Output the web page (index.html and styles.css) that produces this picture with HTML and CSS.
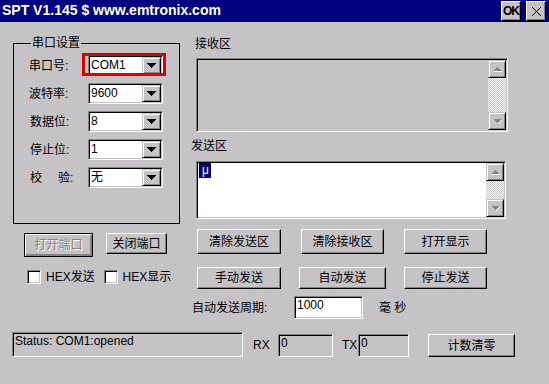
FILE: index.html
```html
<!DOCTYPE html>
<html lang="zh">
<head>
  <meta charset="UTF-8" />
  <title>SPT V1.145</title>
  <link rel="stylesheet" href="styles.css">
</head>
<body>
  <div class="window">
    <div class="titlebar">
      <span class="title">SPT V1.145 $ www.emtronix.com</span>
      <div class="title-btns">
        <button class="tbtn ok">OK</button>
        <button class="tbtn">
          <svg width="9" height="9" viewBox="0 0 9 9" shape-rendering="crispEdges"><path d="M0 0h1v1H0zM1 1h1v1H1zM2 2h1v1H2zM3 3h1v1H3zM4 4h1v1H4zM5 5h1v1H5zM6 6h1v1H6zM7 7h1v1H7zM8 8h1v1H8zM8 0h1v1H8zM7 1h1v1H7zM6 2h1v1H6zM5 3h1v1H5zM3 5h1v1H3zM2 6h1v1H2zM1 7h1v1H1zM0 8h1v1H0z"/></svg>
        </button>
      </div>
    </div>

    <div class="main">
      <div class="left">
        <fieldset class="group">
          <legend>串口设置</legend>
          <div class="row">
            <span class="lbl">串口号:</span>
            <div class="combo marked"><span class="val">COM1</span><span class="drop"><svg width="9" height="5" viewBox="0 0 9 5" shape-rendering="crispEdges"><path d="M0 0h9v1H0zM1 1h7v1H1zM2 2h5v1H2zM3 3h3v1H3zM4 4h1v1H4z"/></svg></span></div>
          </div>
          <div class="row">
            <span class="lbl">波特率:</span>
            <div class="combo"><span class="val">9600</span><span class="drop"><svg width="9" height="5" viewBox="0 0 9 5" shape-rendering="crispEdges"><path d="M0 0h9v1H0zM1 1h7v1H1zM2 2h5v1H2zM3 3h3v1H3zM4 4h1v1H4z"/></svg></span></div>
          </div>
          <div class="row">
            <span class="lbl">数据位:</span>
            <div class="combo"><span class="val">8</span><span class="drop"><svg width="9" height="5" viewBox="0 0 9 5" shape-rendering="crispEdges"><path d="M0 0h9v1H0zM1 1h7v1H1zM2 2h5v1H2zM3 3h3v1H3zM4 4h1v1H4z"/></svg></span></div>
          </div>
          <div class="row">
            <span class="lbl">停止位:</span>
            <div class="combo"><span class="val">1</span><span class="drop"><svg width="9" height="5" viewBox="0 0 9 5" shape-rendering="crispEdges"><path d="M0 0h9v1H0zM1 1h7v1H1zM2 2h5v1H2zM3 3h3v1H3zM4 4h1v1H4z"/></svg></span></div>
          </div>
          <div class="row">
            <span class="lbl">校<span class="gap"></span>验:</span>
            <div class="combo"><span class="val">无</span><span class="drop"><svg width="9" height="5" viewBox="0 0 9 5" shape-rendering="crispEdges"><path d="M0 0h9v1H0zM1 1h7v1H1zM2 2h5v1H2zM3 3h3v1H3zM4 4h1v1H4z"/></svg></span></div>
          </div>
        </fieldset>

        <div class="port-btns">
          <button class="btn default" disabled>打开端口</button>
          <button class="btn close-port">关闭端口</button>
        </div>

        <div class="checks">
          <label class="check"><span class="box"></span>HEX发送</label>
          <label class="check"><span class="box"></span>HEX显示</label>
        </div>
      </div>

      <div class="right">
        <div class="area-label recv-label">接收区</div>
        <div class="textbox recv">
          <div class="text"></div>
          <div class="vscroll">
            <span class="sbtn"><svg width="9" height="5" viewBox="0 0 9 5" shape-rendering="crispEdges"><path fill="#fff" d="M1 4h8v1H1z"/><path fill="#848284" d="M3 0h1v1H3zM2 1h3v1H2zM1 2h5v1H1zM0 3h7v1H0z" transform="translate(1 0)"/></svg></span>
            <span class="track"></span>
            <span class="sbtn"><svg width="9" height="5" viewBox="0 0 9 5" shape-rendering="crispEdges"><path fill="#fff" d="M8 1h1v1H8zM7 2h1v1H7zM6 3h1v1H6zM5 4h1v1H5z"/><path fill="#848284" d="M1 0h7v1H1zM2 1h5v1H2zM3 2h3v1H3zM4 3h1v1H4z"/></svg></span>
          </div>
        </div>

        <div class="area-label send-label">发送区</div>
        <div class="textbox send">
          <div class="text"><span class="caret"></span><span class="sel">μ</span></div>
          <div class="vscroll">
            <span class="sbtn"><svg width="9" height="5" viewBox="0 0 9 5" shape-rendering="crispEdges"><path fill="#fff" d="M1 4h8v1H1z"/><path fill="#848284" d="M3 0h1v1H3zM2 1h3v1H2zM1 2h5v1H1zM0 3h7v1H0z" transform="translate(1 0)"/></svg></span>
            <span class="track"></span>
            <span class="sbtn"><svg width="9" height="5" viewBox="0 0 9 5" shape-rendering="crispEdges"><path fill="#fff" d="M8 1h1v1H8zM7 2h1v1H7zM6 3h1v1H6zM5 4h1v1H5z"/><path fill="#848284" d="M1 0h7v1H1zM2 1h5v1H2zM3 2h3v1H3zM4 3h1v1H4z"/></svg></span>
          </div>
        </div>

        <div class="btn-row row-1">
          <button class="btn w84">清除发送区</button>
          <button class="btn w83">清除接收区</button>
          <button class="btn w83">打开显示</button>
        </div>
        <div class="btn-row row-2">
          <button class="btn w84">手动发送</button>
          <button class="btn w87">自动发送</button>
          <button class="btn w83">停止发送</button>
        </div>
        <div class="period">
          <span class="period-lbl">自动发送周期:</span>
          <div class="field period-input">1000</div>
          <span class="unit">毫 秒</span>
        </div>
      </div>
    </div>

    <div class="status-row">
      <div class="field status">Status: COM1:opened</div>
      <span class="cnt-lbl rx">RX</span>
      <div class="field cnt rx-box">0</div>
      <span class="cnt-lbl tx">TX</span>
      <div class="field cnt tx-box">0</div>
      <button class="btn reset">计数清零</button>
    </div>
  </div>
</body>
</html>
```

FILE: styles.css
```css
* {
  box-sizing: border-box;
}
body {
  margin: 0;
  background: #c6c3c6;
  font-family: "Liberation Sans", "Noto Sans CJK SC", sans-serif;
  font-size: 12px;
  color: #000;
}
.window {
  width: 549px;
  height: 384px;
  background: #c6c3c6;
  overflow: hidden;
}

/* Title bar */
.titlebar {
  height: 22px;
  background: #000080;
  border-bottom: 1px solid #000;
  display: flex;
  align-items: flex-start;
  justify-content: space-between;
  padding: 0 3px 0 2px;
}
.title {
  color: #fff;
  font-weight: bold;
  font-size: 14px;
  line-height: 21px;
}
.title-btns {
  display: flex;
  gap: 5px;
  padding-top: 1px;
}
.tbtn {
  width: 20px;
  height: 20px;
  padding: 0;
  margin: 0;
  background: #c6c3c6;
  border: 1px solid;
  border-color: #fff #000 #000 #fff;
  box-shadow: inset -1px -1px #848284;
  display: flex;
  align-items: center;
  justify-content: center;
  font-family: "Liberation Sans", sans-serif;
  font-weight: bold;
  font-size: 12px;
  color: #000;
  letter-spacing: -1px;
}

/* Layout */
.main {
  display: flex;
}
.left {
  width: 167px;
  margin-left: 13px;
}
.right {
  width: 320px;
  margin-left: 11px;
}

/* Group box */
.group {
  margin: 14px 0 0;
  padding: 5px 0 35px 15px;
  border: 1px solid #000;
  display: flex;
  flex-direction: column;
  gap: 7px;
}
.group legend {
  margin-left: 2px;
  padding: 0 1px;
  line-height: 14px;
}
.row {
  display: flex;
  align-items: center;
  height: 21px;
}
.lbl {
  width: 59px;
  line-height: 14px;
  white-space: nowrap;
}
.row:nth-child(n+4) .lbl {
  padding-left: 1px;
}
.gap {
  display: inline-block;
  width: 16px;
}

/* Combo box */
.combo {
  position: relative;
  width: 75px;
  height: 21px;
  background: #fff;
  border: 1px solid;
  border-color: #848284 #fff #fff #848284;
  box-shadow: inset 1px 1px #000, inset -1px -1px #c6c3c6;
  padding: 1px;
  display: flex;
  align-items: stretch;
}
.combo .val {
  flex: 1;
  padding-left: 1px;
  line-height: 17px;
}
.drop {
  width: 19px;
  background: #c6c3c6;
  border: 1px solid;
  border-color: #c6c3c6 #000 #000 #c6c3c6;
  box-shadow: inset 1px 1px #fff, inset -1px -1px #848284;
  display: flex;
  align-items: center;
  justify-content: center;
}
.drop svg {
  display: block;
}
.marked::after {
  content: "";
  position: absolute;
  left: -7px;
  top: -3px;
  right: -4px;
  bottom: -1px;
  border: 3px solid #e00000;
}

/* Push buttons */
.btn {
  margin: 0;
  padding: 0;
  height: 25px;
  background: #c6c3c6;
  border: 1px solid;
  border-color: #fff #000 #000 #fff;
  box-shadow: inset -1px -1px #848284;
  font-family: "Liberation Sans", "Noto Sans CJK SC", sans-serif;
  font-size: 12px;
  color: #000;
  line-height: 14px;
}
.btn:disabled {
  color: #848284;
  text-shadow: 1px 1px #fff;
}
.btn.default {
  border-color: #000;
  box-shadow: inset 1px 1px #fff, inset -2px -2px #848284, inset -1px -1px #000;
}
.port-btns {
  display: flex;
  align-items: flex-start;
  gap: 13px;
  margin: 9px 0 0 11px;
}
.port-btns .default {
  width: 69px;
  height: 24px;
}
.port-btns .close-port {
  width: 61px;
  height: 21px;
}

/* Check boxes */
.checks {
  display: flex;
  margin: 13px 0 0 14px;
}
.check {
  display: flex;
  align-items: center;
  gap: 5px;
  width: 79px;
  line-height: 14px;
}
.box {
  width: 14px;
  height: 14px;
  background: #fff;
  border: 1px solid;
  border-color: #848284 #fff #fff #848284;
  box-shadow: inset 1px 1px #000, inset -1px -1px #c6c3c6;
}

/* Text areas */
.area-label {
  line-height: 14px;
}
.recv-label {
  margin: 15px 0 0 4px;
}
.send-label {
  margin-top: 7px;
}
.textbox {
  display: flex;
  margin-left: 5px;
  border: 1px solid;
  border-color: #848284 #fff #fff #848284;
  box-shadow: inset 1px 1px #000, inset -1px -1px #c6c3c6;
  padding: 1px;
}
.textbox .text {
  flex: 1;
}
.recv {
  width: 312px;
  height: 74px;
  margin-top: 7px;
  background: #c6c3c6;
}
.send {
  width: 310px;
  height: 58px;
  margin-top: 8px;
  background: #fff;
}
.send .text {
  padding-left: 1px;
  display: flex;
  align-items: flex-start;
}
.caret {
  width: 1px;
  height: 15px;
  background: #000;
}
.sel {
  width: 11px;
  height: 15px;
  background: #000080;
  color: #fff;
  line-height: 15px;
  padding-left: 2px;
}
.vscroll {
  width: 18px;
  display: flex;
  flex-direction: column;
}
.sbtn {
  height: 18px;
  background: #c6c3c6;
  border: 1px solid;
  border-color: #c6c3c6 #000 #000 #c6c3c6;
  box-shadow: inset 1px 1px #fff, inset -1px -1px #848284;
  display: flex;
  align-items: center;
  justify-content: center;
}
.track {
  flex: 1;
  background: repeating-conic-gradient(#c6c3c6 0 25%, #fff 0 50%) 0 0 / 2px 2px;
}

/* Button rows */
.btn-row {
  display: flex;
  margin-left: 6px;
}
.row-1 {
  margin-top: 10px;
  gap: 20px;
}
.row-2 {
  margin-top: 13px;
  gap: 18px;
}
.row-2 .btn {
  height: 22px;
}
.w83 { width: 83px; }
.w84 { width: 84px; }
.w87 { width: 87px; }

/* Period */
.period {
  display: flex;
  align-items: center;
  margin: 7px 0 0 1px;
  height: 23px;
}
.period-lbl {
  width: 102px;
  line-height: 14px;
}
.field {
  background: #fff;
  border: 1px solid;
  border-color: #848284 #fff #fff #848284;
  box-shadow: inset 1px 1px #000, inset -1px -1px #c6c3c6;
  padding: 1px 2px;
  line-height: 15px;
}
.period-input {
  width: 69px;
  height: 23px;
}
.unit {
  margin-left: 16px;
  line-height: 14px;
}

/* Status row */
.status-row {
  display: flex;
  align-items: flex-end;
  margin: 13px 0 0 12px;
}
.status-row .field {
  background: #c6c3c6;
}
.status {
  width: 231px;
  height: 25px;
}
.cnt-lbl {
  line-height: 23px;
}
.rx {
  width: 25px;
  margin-left: 10px;
}
.tx {
  width: 16px;
  margin-left: 9px;
}
.cnt {
  height: 23px;
}
.rx-box {
  width: 55px;
}
.tx-box {
  width: 51px;
}
.reset {
  width: 87px;
  height: 23px;
  margin-left: 19px;
}
```
